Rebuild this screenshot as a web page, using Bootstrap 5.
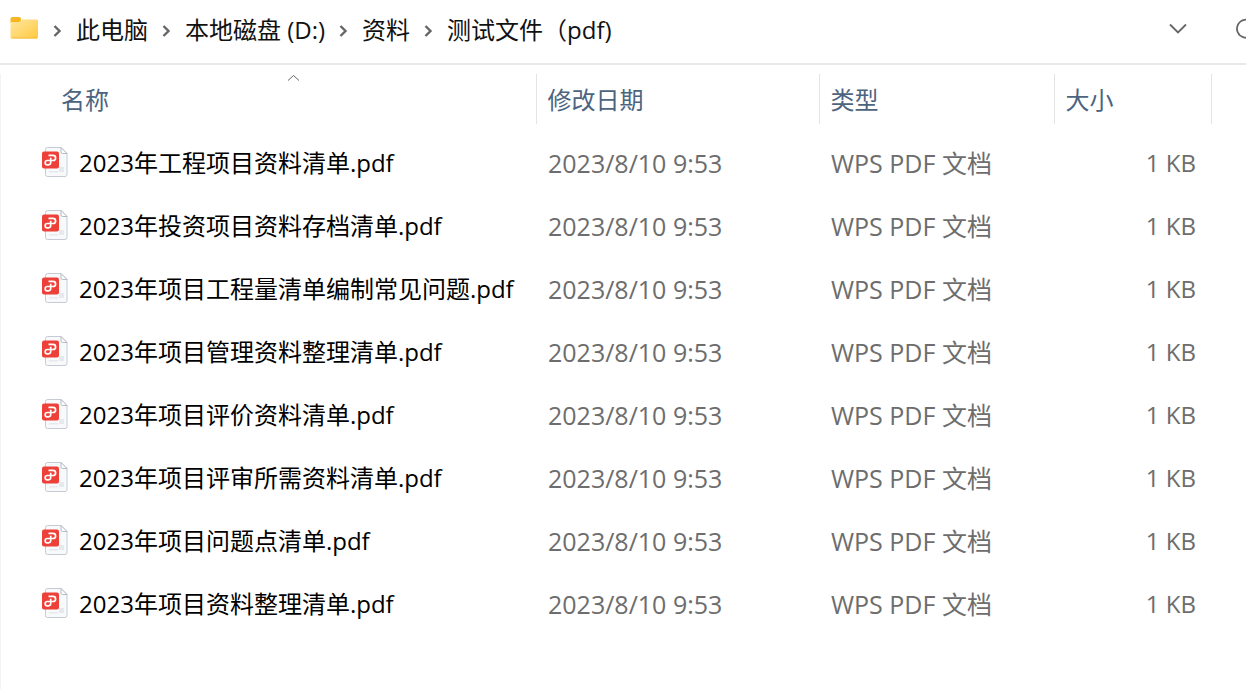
<!DOCTYPE html>
<html lang="zh-CN">
<head>
<meta charset="utf-8">
<meta name="viewport" content="width=device-width, initial-scale=1">
<title>测试文件（pdf）</title>
<link href="https://cdn.jsdelivr.net/npm/bootstrap@5.3.0/dist/css/bootstrap.min.css" rel="stylesheet">
<style>
body { font-family: "Open Sans", "Noto Sans CJK SC", sans-serif; font-size: 24px; line-height: 32px; color: #000; background: #fff; }
.address-bar { height: 65px; padding: 0 0 3px 10px; border-bottom: 2px solid #e8e8e8; overflow: hidden; }
.crumbs a { color: #111; text-decoration: none; }
.crumbs li { display: flex; align-items: center; white-space: nowrap; }
.crumbs .sep { margin: 1px 14px 0 13px; }
.bar-btn { border: 0; background: none; padding: 0 0 2px; line-height: 0; }
.refresh { margin-left: 48px; margin-right: -11px; }
.listing { margin-top: 9px; border-left: 1px solid #f3f3f3; min-height: calc(100vh - 74px); }
.files { table-layout: fixed; width: 100%; }
.files th { position: relative; height: 50px; padding: 2px 0 0 11px; font-weight: 400; color: #4c6480; border-right: 1px solid #e4e4e4; }
.files th:first-child { padding-left: 60px; }
.files tbody td { height: 63px; padding: 0 0 0 12px; color: #6d6d6d; white-space: nowrap; }
.files tbody td:first-child { padding-left: 40px; }
.files tbody .size { text-align: right; padding-right: 15px; }
.files .wide { font-size: 25px; }
.files tbody::before { content: ""; display: block; height: 7px; }
.files a { color: #000; text-decoration: none; }
.file-icon { width: 28px; height: 32px; margin: 0 10px 2px 0; flex: none; }
.sort-mark { position: absolute; top: 0; left: 286px; }
.w-date { width: 283px; } .w-type { width: 235px; } .w-size { width: 157px; } .w-rest { width: 35px; }
</style>
</head>
<body>
<svg width="0" height="0" class="position-absolute" aria-hidden="true">
  <symbol id="pdf" viewBox="0 0 28 32">
    <path d="M6.500 1.500H20L26 7.500V28.500a2 2 0 0 1-2 2H6.500a2 2 0 0 1-2-2V3.500a2 2 0 0 1 2-2z" fill="#f8f9fb" stroke="#c6cad3"/>
    <path d="M20 1.500V6a1.500 1.500 0 0 0 1.500 1.500h4.500z" fill="#fff" stroke="#b4b9c4"/>
    <path d="M18 21h5v5h-5zM8 25h9v1.500H8z" fill="#e6e9ee"/>
    <rect x="1" y="5.500" width="17" height="17" rx="2" fill="#ec4038"/>
    <path d="M7.500 9.300H12a2.600 2.600 0 0 1 0 5.200H6.300a2.100 2.100 0 0 0 0 4.300H7.500a2.200 2.200 0 0 0 2.200-2.200V11.800" fill="none" stroke="#fff" stroke-width="1.700"/>
  </symbol>
  <symbol id="chev" viewBox="0 0 10 14"><path d="M2.500 2l5 5-5 5" fill="none" stroke="#666" stroke-width="2.400"/></symbol>
</svg>

<header class="address-bar d-flex align-items-center">
  <svg width="29" height="24" viewBox="0 0 29 24" class="flex-shrink-0 mb-1" aria-hidden="true">
    <defs><linearGradient id="gold" x1="0" y1="0" x2="1" y2="1"><stop offset="0" stop-color="#ffe7a0"/><stop offset="1" stop-color="#ffc93f"/></linearGradient></defs>
    <path d="M.5 3a2 2 0 0 1 2-2H9a2 2 0 0 1 2 2V7H.5z" fill="#f8b51f"/>
    <path d="M.5 6H9L12 3.500H26.500a1.500 1.500 0 0 1 1.500 1.500V21a1.500 1.500 0 0 1-1.500 1.500H2A1.500 1.500 0 0 1 .5 21z" fill="url(#gold)"/>
    <path d="M1.500 22h25.500" stroke="#f2bd45"/>
  </svg>
  <nav aria-label="路径" class="flex-grow-1">
    <ol class="crumbs list-unstyled d-flex mb-0">
      <li><svg class="sep" width="10" height="14"><use href="#chev"/></svg><a href="#">此电脑</a></li>
      <li><svg class="sep" width="10" height="14"><use href="#chev"/></svg><a href="#">本地磁盘 (D:)</a></li>
      <li><svg class="sep" width="10" height="14"><use href="#chev"/></svg><a href="#">资料</a></li>
      <li><svg class="sep" width="10" height="14"><use href="#chev"/></svg><a href="#">测试文件（pdf)</a></li>
    </ol>
  </nav>
  <button class="bar-btn" type="button" aria-label="展开"><svg width="18" height="12" viewBox="0 0 18 12"><path d="M1 1.500l8 8 8-8" fill="none" stroke="#666" stroke-width="1.800"/></svg></button>
  <button class="bar-btn refresh" type="button" aria-label="刷新"><svg width="22" height="22" viewBox="0 0 22 22"><path d="M17 4a9 9 0 1 0 3 7" fill="none" stroke="#666" stroke-width="1.800"/></svg></button>
</header>

<main class="listing">
  <table class="files">
    <colgroup><col><col class="w-date"><col class="w-type"><col class="w-size"><col class="w-rest"></colgroup>
    <thead>
      <tr><th scope="col" aria-sort="ascending">名称<svg class="sort-mark" width="13" height="8" viewBox="0 0 13 8"><path d="M1 6.500l5.500-5 5.500 5" fill="none" stroke="#666"/></svg></th><th scope="col">修改日期</th><th scope="col">类型</th><th scope="col">大小</th><td></td></tr>
    </thead>
    <tbody id="rows"></tbody>
  </table>
</main>
<script>
const names = ["2023年工程项目资料清单", "2023年投资项目资料存档清单", "2023年项目工程量清单编制常见问题", "2023年项目管理资料整理清单", "2023年项目评价资料清单", "2023年项目评审所需资料清单", "2023年项目问题点清单", "2023年项目资料整理清单"];
document.getElementById("rows").innerHTML = names.map(n =>
  `<tr><td><a href="#" class="d-flex align-items-center"><svg class="file-icon" aria-hidden="true"><use href="#pdf"/></svg>${n}.pdf</a></td><td class="wide">2023/8/10 9:53</td><td class="wide">WPS PDF 文档</td><td class="size">1 KB</td><td></td></tr>`).join("");
</script>
<script src="https://cdn.jsdelivr.net/npm/bootstrap@5.3.0/dist/js/bootstrap.bundle.min.js"></script>
</body>
</html>
